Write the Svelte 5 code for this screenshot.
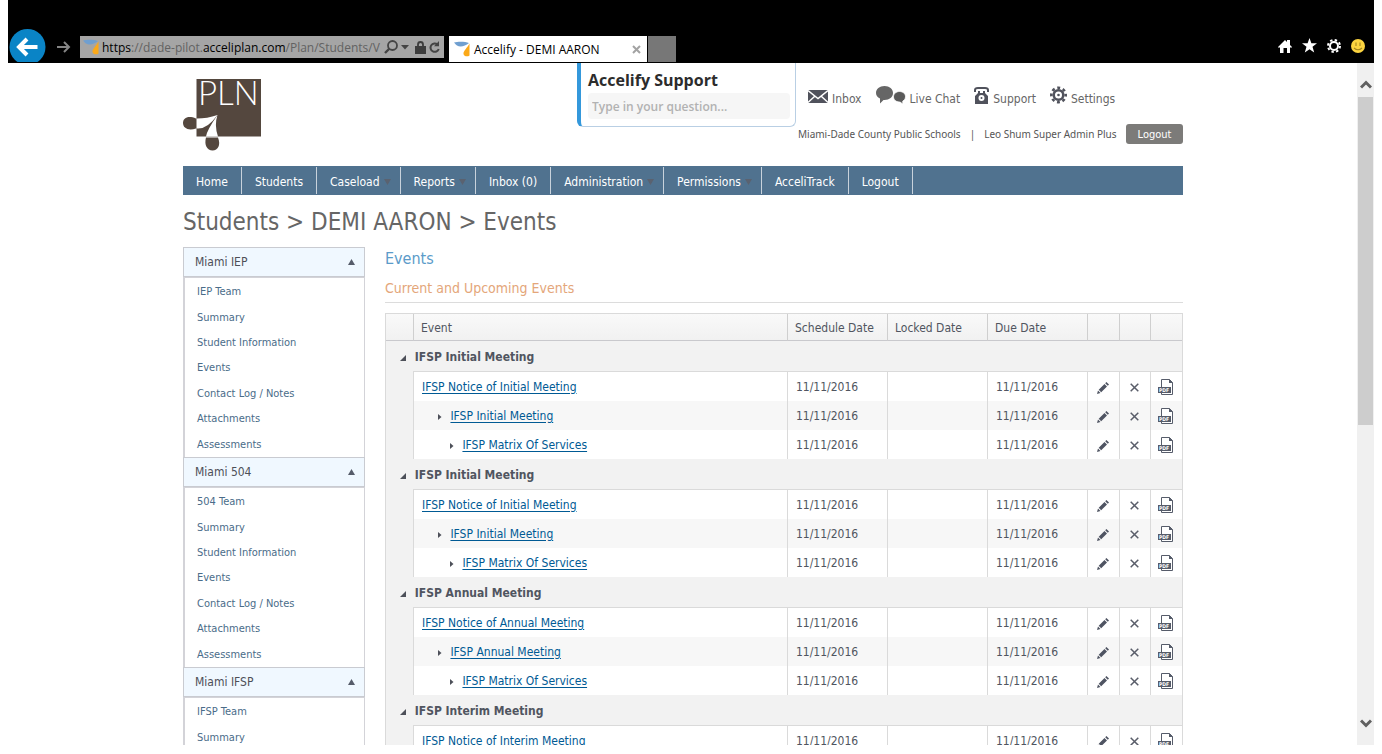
<script>
  const nav = [
    { label: 'Home' },
    { label: 'Students' },
    { label: 'Caseload', menu: true },
    { label: 'Reports', menu: true },
    { label: 'Inbox (0)' },
    { label: 'Administration', menu: true },
    { label: 'Permissions', menu: true },
    { label: 'AcceliTrack' },
    { label: 'Logout' }
  ];

  const sectionItems = ['Summary', 'Student Information', 'Events', 'Contact Log / Notes', 'Attachments', 'Assessments'];
  const sections = [
    { title: 'Miami IEP', items: ['IEP Team', ...sectionItems] },
    { title: 'Miami 504', items: ['504 Team', ...sectionItems] },
    { title: 'Miami IFSP', items: ['IFSP Team', ...sectionItems] }
  ];

  const date = '11/11/2016';
  const groups = ['Initial', 'Initial', 'Annual', 'Interim'].map((kind) => ({
    title: `IFSP ${kind} Meeting`,
    rows: [`IFSP Notice of ${kind} Meeting`, `IFSP ${kind} Meeting`, 'IFSP Matrix Of Services']
  }));
</script>

{#snippet favicon()}
  <svg class="favicon" width="16" height="16" viewBox="0 0 16 16" aria-hidden="true">
    <path d="M0 1.500C4 .500 11 .500 15 2C11 5.500 6 6.500 3 4.500C1.500 3.500 1 2.500 0 1.500Z" fill="#6f9fd0" />
    <path d="M15.500 2.500V14.500C13.500 16 10 15.500 9.500 13C9 10 13.500 6.500 15.500 2.500Z" fill="#fba919" />
  </svg>
{/snippet}

<div class="window">
  <header class="chrome">
    <button class="plain back" aria-label="Back">
      <svg width="37" height="33" viewBox="0 0 37 33">
        <circle cx="18.500" cy="18" r="18" fill="#0a84c6" />
        <path d="M28.500 18H11M18 10L10 18l8 8" fill="none" stroke="#fff" stroke-width="4" />
      </svg>
    </button>
    <button class="plain forward" aria-label="Forward">
      <svg width="14" height="12" viewBox="0 0 14 12">
        <path d="M0 6h12M7 1l5 5-5 5" fill="none" stroke="#858585" stroke-width="2" />
      </svg>
    </button>
    <div class="address">
      {@render favicon()}
      <div class="url" role="textbox" tabindex="0" aria-label="Address" contenteditable="true"><b>https</b>://dade-pilot.<b>acceliplan.com</b>/Plan/Students/V</div>
      <button class="plain" aria-label="Search">
        <svg width="14" height="14" viewBox="0 0 14 14">
          <circle cx="8.500" cy="5.500" r="4.500" fill="none" stroke="#444" stroke-width="1.800" />
          <path d="M5.500 8.500L1 13" stroke="#444" stroke-width="2.400" />
        </svg>
      </button>
      <button class="plain caret" aria-label="Show address list">
        <svg width="8" height="5" viewBox="0 0 8 5"><path d="M0 0h8L4 4.500z" fill="#444" /></svg>
      </button>
      <svg class="lock" width="11" height="13" viewBox="0 0 11 13" aria-hidden="true">
        <path d="M3 6V3.500a2.500 2.500 0 0 1 5 0V6" fill="none" stroke="#3d3d3d" stroke-width="1.800" />
        <rect y="5" width="11" height="8" fill="#3d3d3d" />
      </svg>
      <button class="plain" aria-label="Refresh">
        <svg width="12" height="13" viewBox="0 0 12 13">
          <path d="M8.500 3.500A4.200 4.200 0 1 0 9.700 8" fill="none" stroke="#444" stroke-width="2" />
          <path d="M5 5.200h5V0z" fill="#444" />
        </svg>
      </button>
    </div>
    <div class="tab">
      {@render favicon()}
      <span>Accelify - DEMI AARON</span>
      <button class="plain" aria-label="Close tab">
        <svg width="9" height="9" viewBox="0 0 9 9"><path d="M1 1l7 7M8 1L1 8" stroke="#a3a3a3" stroke-width="2" /></svg>
      </button>
    </div>
    <button class="newtab" aria-label="New tab"></button>
    <div class="tools">
      <button class="plain" aria-label="Home">
        <svg width="14" height="14" viewBox="0 0 14 14"><path d="M0 8L7 1l2 2V1h3v5l2 2-1 1-1-1v6H9V9H5.500v5H2V8L1 9z" fill="#fff" /></svg>
      </button>
      <button class="plain" aria-label="Favorites">
        <svg width="15" height="15" viewBox="0 0 15 15"><path d="M7.500 0l1.900 5.300H15l-4.500 3.500L12.200 14.500 7.500 11.200 2.800 14.500l1.700-5.700L0 5.300h5.600z" fill="#fff" /></svg>
      </button>
      <button class="plain" aria-label="Tools">
        <svg width="14" height="14" viewBox="0 0 14 14">
          <circle cx="7" cy="7" r="6" fill="none" stroke="#fff" stroke-width="2" stroke-dasharray="2.400 2.310" />
          <circle cx="7" cy="7" r="4" fill="none" stroke="#fff" stroke-width="2" />
        </svg>
      </button>
      <button class="plain" aria-label="Feedback">
        <svg width="14" height="14" viewBox="0 0 14 14">
          <circle cx="7" cy="7" r="7" fill="#fcd440" />
          <path d="M5 3.500v3.500M9 3.500v3.500M3 9q4 3.500 8 0" fill="none" stroke="#a5851c" stroke-width="1.100" />
        </svg>
      </button>
    </div>
  </header>

  <div class="viewport">
    <div class="page">
      <div class="masthead">
        <a class="logo" href="#home" aria-label="PLN home">
          <svg width="79" height="72" viewBox="0 0 79 72">
            <rect x="13.500" width="64.500" height="57.500" fill="#54473e" />
            <text x="15" y="26" class="logotext">PLN</text>
            <path d="M13 39.500C5 36 0 39 0 44S5 52 13 49.500z" fill="#54473e" />
            <path d="M14 39.500Q24 39.500 34.500 36Q24 50.500 14 49.500z" fill="#fff" />
            <path d="M23 58.500C21 66 24 71.500 29.500 71.500S38 66 35 58.500z" fill="#54473e" />
            <path d="M23 57.500Q24 51 34.500 36Q31 46 35 57.500z" fill="#fff" />
          </svg>
        </a>
        <div class="support">
          <label for="question">Accelify Support</label>
          <input id="question" type="text" placeholder="Type in your question..." />
        </div>
        <div class="account">
          <div class="quick">
            <a href="#inbox">
              <svg width="20" height="13" viewBox="0 0 20 13">
                <rect width="20" height="13" fill="#50525c" />
                <path d="M0 .500L10 8.500 20 .500M0 12.500L7 6M20 12.500L13 6" fill="none" stroke="#fff" stroke-width="1.400" />
              </svg>
              Inbox
            </a>
            <a href="#chat">
              <svg class="tall" width="30" height="18" viewBox="0 0 30 18">
                <path d="M8.500 0C13.500 0 17 3 17 7s-3.500 7-8.500 7h-1L4 17.500V12.500C1.500 11.500 0 9.500 0 7c0-4 3.500-7 8.500-7z" fill="#666" />
                <path d="M23.500 5.500c3.600 0 6 2.200 6 5.200 0 2-1 3.500-2.700 4.300v3L24 16h-.500c-3.600 0-6-2.200-6-5.200s2.400-5.300 6-5.300z" fill="#5a5a5a" stroke="#fff" stroke-width=".8" />
              </svg>
              Live Chat
            </a>
            <a href="#support">
              <svg class="tall" width="15" height="17" viewBox="0 0 15 17">
                <path d="M1 5V3Q1 1 4 1h7q3 0 3 2v2" fill="none" stroke="#50525c" stroke-width="2" />
                <path d="M4 4h2v2h3V4h2v2l3 3v8H1V9l3-3z" fill="#50525c" />
                <circle cx="7.500" cy="11" r="3" fill="#fff" />
                <circle cx="7.500" cy="11" r="1" fill="#50525c" />
              </svg>
              Support
            </a>
            <a href="#settings">
              <svg class="tall" width="17" height="18" viewBox="0 0 17 18">
                <circle cx="8.500" cy="9" r="7.200" fill="none" stroke="#50525c" stroke-width="2.600" stroke-dasharray="2.900 2.755" stroke-dashoffset="1.450" />
                <circle cx="8.500" cy="9" r="4.800" fill="none" stroke="#50525c" stroke-width="2.600" />
                <circle cx="8.500" cy="9" r="1.300" fill="#50525c" />
              </svg>
              Settings
            </a>
          </div>
          <div class="user">
            <span>Miami-Dade County Public Schools</span>
            <span>|</span>
            <span>Leo Shum Super Admin Plus</span>
            <button class="logout">Logout</button>
          </div>
        </div>
      </div>

      <nav>
        {#each nav as item}
          <a href="#nav" class:menu={item.menu}>
            {item.label}
            {#if item.menu}
              <svg width="7" height="6" viewBox="0 0 7 6"><path d="M0 0h7L3.500 6z" fill="#5a6270" /></svg>
            {/if}
          </a>
        {/each}
      </nav>

      <h1>Students &gt; DEMI AARON &gt; Events</h1>

      <div class="columns">
        <aside>
          {#each sections as section}
            <button class="fold">
              {section.title}
              <svg width="7" height="6" viewBox="0 0 7 6"><path d="M3.500 0L7 6H0z" fill="#565c6a" /></svg>
            </button>
            <ul>
              {#each section.items as item}
                <li><a href="#section">{item}</a></li>
              {/each}
            </ul>
          {/each}
        </aside>

        <main>
          <h2>Events</h2>
          <h3>Current and Upcoming Events</h3>
          <table>
            <colgroup>
              <col class="c-tree" /><col /><col class="c-date" /><col class="c-date" /><col class="c-date" />
              <col class="c-icon" /><col class="c-mid" /><col class="c-icon" />
            </colgroup>
            <thead>
              <tr>
                <th></th><th>Event</th><th>Schedule Date</th><th>Locked Date</th><th>Due Date</th><th></th><th></th><th></th>
              </tr>
            </thead>
            {#each groups as group}
              <tbody>
                <tr class="group">
                  <td colspan="8">
                    <svg width="6" height="6" viewBox="0 0 6 6"><path d="M6 0v6H0z" fill="#4d5059" /></svg>
                    {group.title}
                  </td>
                </tr>
                {#each group.rows as row, depth}
                  <tr class="event">
                    <td></td>
                    <td class="name depth{depth}">
                      {#if depth}
                        <svg width="4" height="6" viewBox="0 0 4 6"><path d="M0 0l3.500 3L0 6z" fill="#4d5059" /></svg>
                      {/if}
                      <a href="#event">{row}</a>
                    </td>
                    <td>{date}</td>
                    <td></td>
                    <td>{date}</td>
                    <td class="act">
                      <button class="plain" aria-label="Edit">
                        <svg width="12" height="12" viewBox="0 0 12 12">
                          <path d="M0 12L1 8.500 3.500 11zM1.700 7.700L7.500 1.900 10 4.400 4.200 10.200zM8.200 1.200L9.400 0 12 2.500 10.800 3.700z" fill="#4f5462" />
                        </svg>
                      </button>
                    </td>
                    <td class="act">
                      <button class="plain" aria-label="Delete">
                        <svg width="9" height="9" viewBox="0 0 9 9"><path d="M.700 .700l7.600 7.600M8.300 .700L.700 8.300" stroke="#595d69" stroke-width="1.500" /></svg>
                      </button>
                    </td>
                    <td class="act">
                      <button class="plain" aria-label="Open PDF">
                        <svg width="16" height="17" viewBox="0 0 16 17">
                          <path d="M3.500 8V.500H11.500L14.500 3.500V15.500H3.500V14" fill="#fff" stroke="#565c6a" />
                          <path d="M11 0v4h4z" fill="#565c6a" />
                          <rect y="8" width="13" height="6" fill="#565c6a" />
                          <text x="1" y="13" class="pdf">PDF</text>
                        </svg>
                      </button>
                    </td>
                  </tr>
                {/each}
              </tbody>
            {/each}
          </table>
        </main>
      </div>
    </div>

    <div class="scrollbar" aria-hidden="true">
      <svg width="12" height="9" viewBox="0 0 12 9"><path d="M1 7.500L6 2.500l5 5" fill="none" stroke="#606060" stroke-width="3" /></svg>
      <div class="thumb"></div>
      <svg width="12" height="9" viewBox="0 0 12 9"><path d="M1 1.500L6 6.500l5-5" fill="none" stroke="#606060" stroke-width="3" /></svg>
    </div>
  </div>
</div>

<style>
  :global(body) {
    margin: 0;
    background: #fff;
  }
  .window {
    box-sizing: border-box;
    height: 100vh;
    padding: 0 8px 9px;
    display: flex;
    flex-direction: column;
    font: 12px "DejaVu Sans Condensed", "DejaVu Sans", sans-serif;
    color: #505050;
  }
  .window svg {
    display: block;
    flex: none;
  }
  .window a {
    text-decoration: none;
    color: inherit;
  }
  .plain {
    background: none;
    border: 0;
    padding: 0;
    display: block;
    flex: none;
  }

  .chrome {
    box-sizing: border-box;
    height: 63px;
    flex: none;
    padding: 0 9px 1px 1px;
    background: #000;
    display: flex;
    align-items: flex-end;
    font-family: "Open Sans", "Noto Sans", sans-serif;
  }
  .forward {
    margin: 0 9px 9px 11px;
  }
  .address {
    box-sizing: border-box;
    flex: 0 1 364px;
    min-width: 0;
    height: 22px;
    margin-bottom: 4px;
    padding: 0 3px;
    background: #a5a5a5;
    display: flex;
    align-items: center;
    gap: 3px;
    color: #626262;
  }
  .url {
    flex: 1;
    overflow: hidden;
    white-space: nowrap;
    line-height: 20px;
    padding-top: 2px;
  }
  .url b {
    font-weight: 400;
    color: #000;
  }
  .caret {
    margin-right: 3px;
  }
  .tab {
    box-sizing: border-box;
    flex: 0 1 198px;
    height: 26px;
    margin-left: 5px;
    padding: 0 6px 0 5px;
    background: #fff;
    color: #000;
    display: flex;
    align-items: center;
    gap: 4px;
    line-height: 20px;
  }
  .tab span {
    flex: 1;
    white-space: nowrap;
    padding-top: 2px;
  }
  .newtab {
    width: 28px;
    height: 26px;
    margin-left: 1px;
    padding: 0;
    border: 0;
    background: #777;
  }
  .tools {
    margin-left: auto;
    padding-bottom: 9px;
    display: flex;
    align-items: center;
    gap: 10px;
  }

  .viewport {
    flex: 1;
    min-height: 0;
    overflow: hidden;
    display: flex;
    align-items: flex-start;
  }
  .page {
    box-sizing: border-box;
    flex: 0 1 1001px;
    min-width: 0;
    margin: 0 auto;
    padding-left: 1px;
  }
  .scrollbar {
    box-sizing: border-box;
    flex: 0 0 17px;
    align-self: stretch;
    padding: 17px 0;
    background: #f0f0f0;
    display: flex;
    flex-direction: column;
    align-items: center;
  }
  .thumb {
    width: 15px;
    height: 328px;
    margin: 8px 0 auto;
    background: #cdcdcd;
  }

  .masthead {
    height: 103px;
    display: flex;
    align-items: flex-start;
  }
  .logo {
    margin: 16px auto 0 0;
  }
  .logotext {
    font: 300 33px Lato, "Open Sans", sans-serif;
    fill: #fff;
  }
  .pdf {
    font: 700 5px "DejaVu Sans Condensed", sans-serif;
    fill: #fff;
  }
  .support {
    box-sizing: border-box;
    width: 219px;
    height: 64px;
    padding: 5px 5px 0 7px;
    border: 1px solid #b9cfe4;
    border-top: 0;
    border-left: 4px solid #3498db;
    border-radius: 0 0 6px 6px;
    font-family: "Open Sans", "Noto Sans", sans-serif;
  }
  .support label {
    display: block;
    font-size: 16px;
    font-weight: 700;
    line-height: 25px;
    color: #2c2c2c;
  }
  .support input {
    box-sizing: border-box;
    width: 100%;
    height: 26px;
    padding: 0 4px;
    border: 0;
    border-radius: 4px;
    background: #f6f6f6;
    font: 600 12px "Open Sans", "Noto Sans", sans-serif;
  }
  .support input::placeholder {
    color: #b2b2b2;
    opacity: 1;
  }
  .account {
    padding-top: 25px;
    margin-left: 2px;
    flex: 0 0 385px;
    color: #666;
  }
  .quick {
    display: flex;
    gap: 14px;
    padding-left: 10px;
    margin-bottom: 13px;
  }
  .quick a {
    display: flex;
    align-items: center;
    gap: 4px;
    height: 23px;
    line-height: 23px;
    white-space: nowrap;
  }
  .quick svg {
    margin-bottom: 6px;
  }
  .quick .tall {
    margin-bottom: 9px;
  }
  .user {
    display: flex;
    align-items: center;
    gap: 9px;
    white-space: nowrap;
    font-family: "Noto Sans", sans-serif;
    font-size: 10px;
    color: #555;
  }
  .logout {
    width: 57px;
    height: 20px;
    margin-left: auto;
    padding: 0;
    border: 0;
    border-radius: 3px;
    background: #7c7b79;
    color: #fff;
    font: 11px "DejaVu Sans Condensed", "DejaVu Sans", sans-serif;
  }

  nav {
    height: 29px;
    padding: 1px 0;
    box-sizing: border-box;
    background: #50728f;
    display: flex;
  }
  .window nav a {
    display: flex;
    align-items: center;
    gap: 4px;
    padding: 2px 13px 0;
    border-right: 1px solid #c8d2dc;
    color: #fff;
    white-space: nowrap;
  }
  .window nav .menu {
    padding-right: 9px;
  }
  h1 {
    margin: 12px 0 10px;
    font-size: 24px;
    font-weight: 400;
    line-height: 30px;
    color: #666;
  }

  .columns {
    display: flex;
    align-items: flex-start;
    gap: 20px;
  }
  aside {
    flex: 0 0 182px;
  }
  .fold {
    box-sizing: border-box;
    width: 100%;
    height: 30px;
    padding: 0 9px 0 11px;
    border: 1px solid #c9cbd1;
    background: #f0f8ff;
    display: flex;
    align-items: center;
    justify-content: space-between;
    font: 12px "DejaVu Sans Condensed", "DejaVu Sans", sans-serif;
    color: #4d4f57;
  }
  aside ul {
    box-sizing: border-box;
    min-height: 180px;
    margin: 0;
    padding: 1px 12px 0;
    border: 1px solid #d3d3d8;
    border-bottom: 0;
    border-left-width: 2px;
    list-style: none;
    display: flex;
    flex-direction: column;
  }
  aside li {
    flex: 1;
    display: flex;
    align-items: center;
    font-size: 11px;
    color: #4a6c89;
  }

  main {
    flex: 1;
    min-width: 0;
  }
  h2 {
    margin: 0;
    padding-top: 1px;
    font-size: 16px;
    font-weight: 400;
    line-height: 22px;
    color: #5b9bc9;
  }
  h3 {
    margin: 7px 0 10px;
    padding-bottom: 3px;
    border-bottom: 1px solid #dcdcdc;
    font-size: 14px;
    font-weight: 400;
    line-height: 22px;
    color: #e4a67a;
  }
  table {
    width: 100%;
    table-layout: fixed;
    border-collapse: separate;
    border-spacing: 0;
    border: 1px solid #dadada;
    background: #f2f2f2;
  }
  .c-tree {
    width: 27px;
  }
  .c-date {
    width: 100px;
  }
  .c-icon {
    width: 32px;
  }
  .c-mid {
    width: 31px;
  }
  th,
  td {
    box-sizing: border-box;
    padding: 0 8px;
    text-align: left;
    font-weight: 400;
    white-space: nowrap;
    color: #505560;
  }
  th {
    height: 27px;
    border-bottom: 1px solid #c9c9cd;
    background: linear-gradient(#f9f9f9, #f1f1f1);
    padding: 2px 7px 0;
  }
  th + th {
    border-left: 1px solid #cfcfcf;
  }
  .group td {
    height: 30px;
    padding: 2px 14px 0;
    font-weight: 700;
  }
  .group svg {
    display: inline-block;
    margin-right: 5px;
  }
  .event td {
    height: 29px;
  }
  .event td + td {
    border-left: 1px solid #dadada;
    background: #fff;
  }
  .event:nth-child(odd) td + td {
    background: #f7f7f7;
  }
  .event:nth-child(2) td {
    height: 30px;
  }
  .event:nth-child(2) td + td {
    border-top: 1px solid #dadada;
  }
  .event svg {
    display: inline-block;
  }
  .event .depth1 {
    padding-left: 24px;
  }
  .event .depth2 {
    padding-left: 36px;
  }
  .name svg {
    margin-right: 5px;
  }
  .window .name a {
    color: #005a94;
    text-decoration: underline;
    text-underline-offset: 2px;
  }
  .event .act {
    padding: 2px 1px 0 0;
  }
  .act button {
    margin: 0 auto;
  }
  .window .act svg {
    display: block;
  }
</style>
